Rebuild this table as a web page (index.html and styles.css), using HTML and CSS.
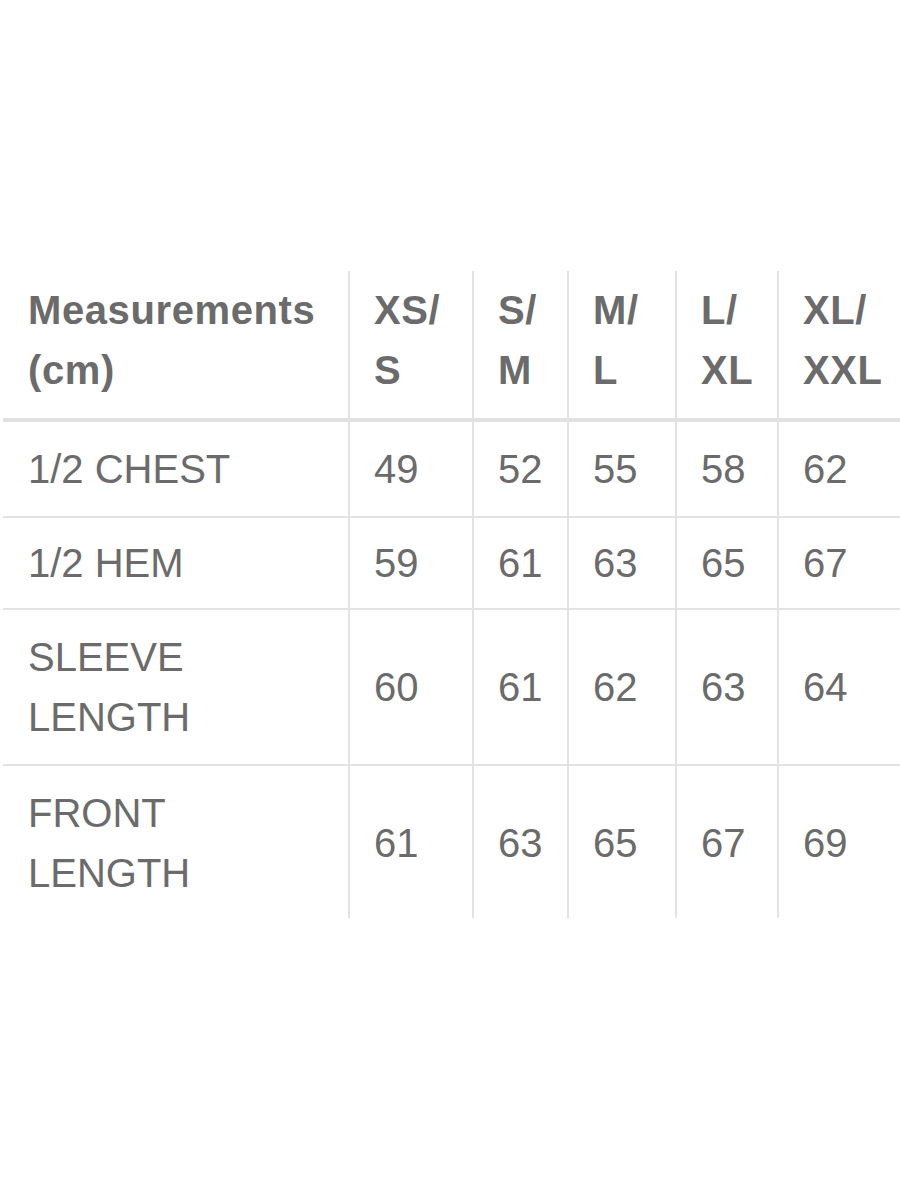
FILE: index.html
```html
<!DOCTYPE html>
<html lang="en">
<head>
<meta charset="utf-8">
<title>Size chart</title>
<link rel="stylesheet" href="styles.css">
</head>
<body>
<div class="page">
  <table class="sizes">
    <colgroup>
      <col class="c-label">
      <col class="c-xs">
      <col class="c-s">
      <col class="c-m">
      <col class="c-l">
      <col class="c-xl">
    </colgroup>
    <thead>
      <tr>
        <th>Measurements<br>(cm)</th>
        <th>XS/<br>S</th>
        <th>S/<br>M</th>
        <th>M/<br>L</th>
        <th>L/<br>XL</th>
        <th>XL/<br>XXL</th>
      </tr>
    </thead>
    <tbody>
      <tr>
        <td>1/2 CHEST</td>
        <td>49</td><td>52</td><td>55</td><td>58</td><td>62</td>
      </tr>
      <tr class="short">
        <td>1/2 HEM</td>
        <td>59</td><td>61</td><td>63</td><td>65</td><td>67</td>
      </tr>
      <tr>
        <td>SLEEVE<br>LENGTH</td>
        <td>60</td><td>61</td><td>62</td><td>63</td><td>64</td>
      </tr>
      <tr>
        <td>FRONT<br>LENGTH</td>
        <td>61</td><td>63</td><td>65</td><td>67</td><td>69</td>
      </tr>
    </tbody>
  </table>
</div>
</body>
</html>
```

FILE: styles.css
```css
html, body {
  margin: 0;
  padding: 0;
  background: #ffffff;
}

body {
  width: 900px;
  height: 1200px;
  overflow: hidden;
  font-family: "Liberation Sans", Arial, Helvetica, sans-serif;
  color: #6b6b6b;
}

.page {
  padding: 271px 0 0 3px;
}

.sizes {
  border-collapse: separate;
  border-spacing: 0;
  table-layout: fixed;
  width: 897px;
  font-size: 40px;
  line-height: 60px;
}

.c-label { width: 345px; }
.c-xs { width: 124px; }
.c-s { width: 95px; }
.c-m { width: 108px; }
.c-l { width: 102px; }
.c-xl { width: 123px; }

.sizes th,
.sizes td {
  box-sizing: border-box;
  text-align: left;
  vertical-align: middle;
  padding: 17px 0 17px 24px;
  border-bottom: 2px solid #e3e3e3;
  white-space: nowrap;
}

.sizes th + th,
.sizes td + td {
  border-left: 2px solid #e3e3e3;
}

.sizes th:first-child,
.sizes td:first-child {
  padding-left: 25px;
}

.sizes th {
  font-weight: bold;
  letter-spacing: 0.6px;
  color: #6b6b6b;
  padding-top: 9px;
  padding-bottom: 18px;
  vertical-align: top;
  border-bottom: 4px solid #e1e1e1;
}

.sizes tr.short td {
  padding-top: 15px;
  padding-bottom: 15px;
}

.sizes tbody tr:last-child td {
  border-bottom: none;
  padding-bottom: 15px;
}
```
